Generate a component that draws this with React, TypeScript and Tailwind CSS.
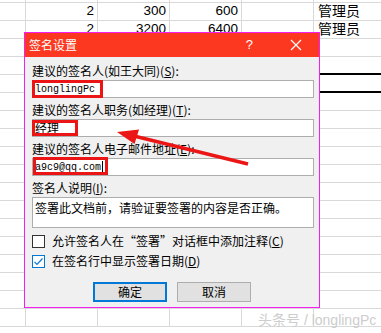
const COLS = [26, 72, 72, 72, 72];

type Row = { cells: string[]; thick?: boolean };

const rows: Row[] = [
  { cells: ["", "", "", "", "", "管理员"] },
  { cells: ["", "2", "300", "600", "", "管理员"] },
  { cells: ["", "2", "3200", "6400", "", "管理员"] },
  ...Array.from({ length: 16 }, (_, i) => ({
    cells: ["", "", "", "", "", ""],
    thick: i === 1 || i === 2,
  })),
];

const SheetRow = ({ row }: { row: Row }) => (
  <div className="flex h-[18px] shrink-0">
    {COLS.map((w, i) => (
      <div
        key={i}
        className="box-border h-full border-r border-b border-[#d9d9d9] flex items-center justify-end pr-[3px] text-[13.5px] text-black"
        style={{ width: w }}
      >
        {row.cells[i]}
      </div>
    ))}
    <div
      className={
        row.thick
          ? "box-border h-full flex-1 border-b-2 border-black flex items-center pl-[4px] text-[14px] text-black"
          : "box-border h-full flex-1 border-b border-[#d9d9d9] flex items-center pl-[4px] text-[14px] text-black"
      }
    >
      {row.cells[5]}
    </div>
  </div>
);

const Label = ({ children }: { children: React.ReactNode }) => (
  <div className="h-[16px] leading-[16px] text-[12px] text-black">{children}</div>
);

const Field = ({ children, mono }: { children?: React.ReactNode; mono?: boolean }) => (
  <div
    className={
      "mt-[1px] h-[18px] border border-[#adadad] bg-white pl-[2px] flex items-center text-black " +
      (mono ? "font-['Liberation_Mono',monospace] text-[10px]" : "text-[12px]")
    }
  >
    {children}
  </div>
);

export default function App() {
  return (
    <div className="relative w-[381px] h-[333px] overflow-hidden bg-white font-['Liberation_Sans','Noto_Sans_CJK_SC',sans-serif]">
      {/* spreadsheet */}
      <div className="flex flex-col -mt-[15px]">
        {rows.map((r, i) => (
          <SheetRow key={i} row={r} />
        ))}
      </div>

      {/* dialog */}
      <div className="absolute left-[24px] top-[32px] w-[296px] h-[276px] border border-[#f21ef2] bg-[#f0f0f0] flex flex-col font-['Noto_Sans_CJK_SC',sans-serif]">
        <div className="h-[24px] shrink-0 bg-[#fc3920] flex items-center pl-[4px] text-white text-[12px]">
          <span>签名设置</span>
          <span className="ml-auto mr-[37px] text-[13px] font-['Liberation_Sans',sans-serif]">?</span>
          <svg width="12" height="12" viewBox="0 0 12 12" className="mr-[17px]">
            <path d="M1 1L11 11M11 1L1 11" stroke="white" strokeWidth="1.2" />
          </svg>
        </div>

        <div className="flex flex-col pl-[7px] pr-[5px] pt-[6px]">
          <Label>
            建议的签名人(如王大同)(<span className="underline">S</span>):
          </Label>
          <Field mono>longlingPc</Field>

          <div className="mt-[4px]">
            <Label>
              建议的签名人职务(如经理)(<span className="underline">T</span>):
            </Label>
          </div>
          <Field>经理</Field>

          <div className="mt-[4px]">
            <Label>
              建议的签名人电子邮件地址(<span className="underline">E</span>):
            </Label>
          </div>
          <Field mono>
            a9c9@qq.com<span className="ml-[1px] inline-block w-[1px] h-[13px] bg-black" />
          </Field>

          <div className="mt-[4px]">
            <Label>
              签名人说明(<span className="underline">I</span>):
            </Label>
          </div>
          <div className="mt-[1px] h-[31px] border border-[#adadad] bg-white pl-[2px] pt-[1px] text-[12px] leading-[18px] text-black">
            签署此文档前，请验证要签署的内容是否正确。
          </div>

          <div className="mt-[5px] h-[16px] flex items-center gap-[7px] text-[12px] text-black">
            <div className="w-[13px] h-[13px] border border-[#333] bg-white" />
            <span>
              允许签名人在“签署”对话框中添加注释(<span className="underline">C</span>)
            </span>
          </div>
          <div className="mt-[4px] h-[16px] flex items-center gap-[7px] text-[12px] text-black">
            <div className="w-[13px] h-[13px] border border-[#0078d7] bg-white flex items-center justify-center">
              <svg width="11" height="11" viewBox="0 0 11 11">
                <path d="M1.5 5.8L4 8.3L9.5 2.5" fill="none" stroke="#0078d7" strokeWidth="1.2" />
              </svg>
            </div>
            <span>
              在签名行中显示签署日期(<span className="underline">D</span>)
            </span>
          </div>

          <div className="mt-[13px] flex justify-center gap-[10px] pr-[2px]">
            <button className="w-[74px] h-[20px] border-2 border-[#0078d7] bg-[#e1e1e1] text-[12px] text-black flex items-center justify-center">
              确定
            </button>
            <button className="w-[74px] h-[20px] border border-[#adadad] bg-[#e1e1e1] text-[12px] text-black flex items-center justify-center">
              取消
            </button>
          </div>
        </div>
      </div>

      {/* annotation boxes */}
      <div className="absolute left-[32px] top-[80px] w-[71px] h-[18px] border-[3px] border-[#ec1515]" />
      <div className="absolute left-[32px] top-[120px] w-[46px] h-[16px] border-[3px] border-[#ec1515]" />
      <div className="absolute left-[33px] top-[157px] w-[75px] h-[18px] border-[3px] border-[#ec1515]" />

      {/* arrow */}
      <svg className="absolute left-0 top-0 pointer-events-none" width="381" height="333" viewBox="0 0 381 333">
        <line x1="248" y1="164" x2="134" y2="136" stroke="#ec1515" strokeWidth="3.5" />
        <polygon points="117,132 139,129.5 134.5,144" fill="#ec1515" />
      </svg>

      {/* watermark */}
      <div className="absolute left-[258px] top-[310px] text-[14px] text-[#cdcdcd] font-['Liberation_Sans','Noto_Sans_CJK_SC',sans-serif] whitespace-nowrap">
        头条号 / longlingPc
      </div>
    </div>
  );
}
